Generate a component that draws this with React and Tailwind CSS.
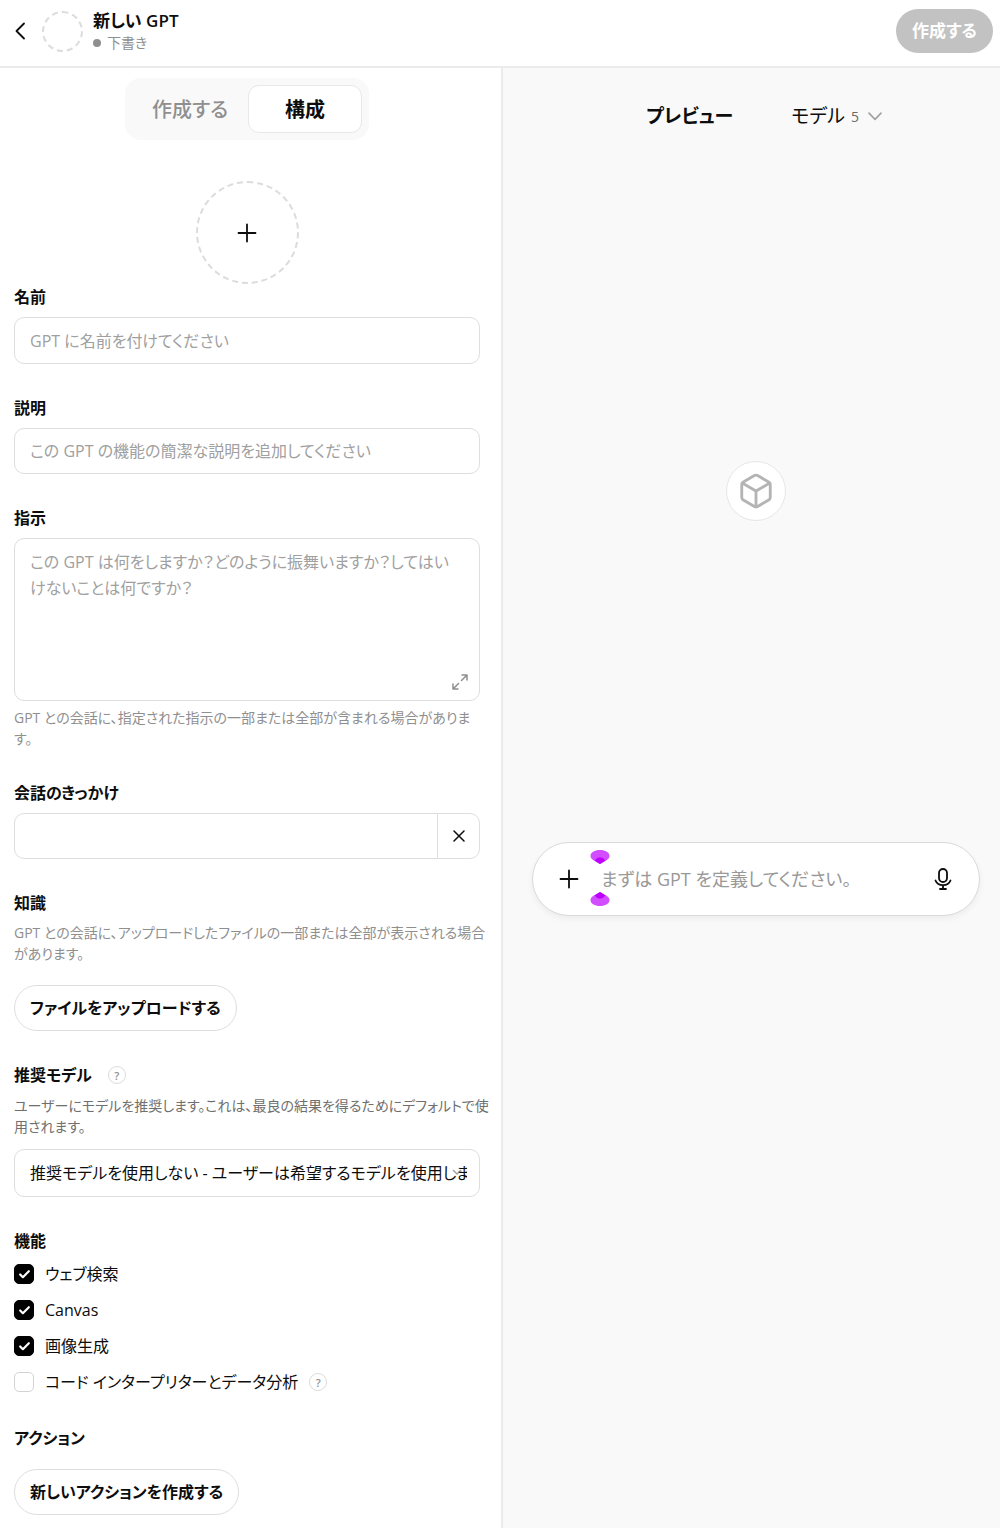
import React, { useState } from 'react';
import { Box, Check } from 'lucide-react';

const FEATURES = [
  { id: 'web', label: 'ウェブ検索', on: true },
  { id: 'canvas', label: 'Canvas', on: true },
  { id: 'image', label: '画像生成', on: true },
  { id: 'code', label: 'コード インタープリターとデータ分析', on: false, help: true },
];

const Plus = () => (
  <svg width="20" height="20" viewBox="0 0 20 20" fill="none" stroke="currentColor" strokeWidth="1.8" strokeLinecap="round" aria-hidden="true">
    <path d="M10 1.5v17M1.5 10h17" />
  </svg>
);

const Help = () => (
  <button type="button" aria-label="ヘルプ" className="flex h-[18px] w-[18px] shrink-0 items-center justify-center rounded-full border border-[#dcdcdc] text-[11px] leading-none font-semibold text-[#8f8f8f]">
    ?
  </button>
);

const Label = ({ htmlFor, children }) => (
  <label htmlFor={htmlFor} className="block text-base leading-[26px] font-semibold">{children}</label>
);

const Heading = ({ children }) => (
  <h2 className="text-base leading-[26px] font-semibold">{children}</h2>
);

const fieldClass = 'block w-full rounded-[10px] border border-[#dedede] px-[15px] text-base placeholder:text-[#a0a0a0] outline-none';
const pillClass = 'h-[46px] rounded-full border border-[#dedede] bg-white px-[15px] text-base font-semibold';
// hints may run a little past the fields before they wrap
const hintClass = '-mr-[14px] text-[14px] leading-[21px]';

const Header = () => (
  <header className="flex h-[68px] items-center border-b-2 border-[#ebebeb] bg-white pr-[7px] pb-1 pl-[14px]">
    <button type="button" aria-label="戻る" className="flex w-[28px]">
      <svg width="12" height="18" viewBox="0 0 12 18" fill="none" stroke="currentColor" strokeWidth="1.8" strokeLinecap="round" strokeLinejoin="round">
        <path d="M10 1.5 2.5 9l7.5 7.5" />
      </svg>
    </button>
    <div className="h-[41px] w-[41px] rounded-full border-2 border-dashed border-[#dcdcdc]" />
    <div className="ml-[10px]">
      <h1 className="text-[17px] leading-[23px] font-semibold">新しい GPT</h1>
      <p className="flex items-center gap-[6px] text-[14px] leading-[22px] text-[#8f8f8f]">
        <span className="h-2 w-2 rounded-full bg-[#8f8f8f]" />
        下書き
      </p>
    </div>
    <button type="button" className="ml-auto h-11 rounded-full bg-[#c2c2c2] px-4 text-[17px] font-semibold text-white">作成する</button>
  </header>
);

const Tabs = () => (
  <div role="tablist" className="mx-auto flex h-[62px] rounded-2xl bg-[#f9f9f9] p-[7px]">
    <button type="button" role="tab" aria-selected="false" className="px-5 pt-[2px] text-[20px] font-medium text-[#8f8f8f]">作成する</button>
    <button type="button" role="tab" aria-selected="true" className="w-[114px] rounded-[11px] border border-[#e8e8e8] bg-white pt-[2px] text-[20px] font-semibold">構成</button>
  </div>
);

const Preview = () => (
  <section aria-label="プレビュー" className="flex min-w-0 flex-1 flex-col bg-[#f9f9f9] pr-5 pl-[29px]">
    <div className="mt-8 flex h-8 items-center justify-center gap-[58px] pl-4 text-[19px]">
      <h2 className="font-semibold">プレビュー</h2>
      <button type="button" className="flex items-center">
        モデル
        <span className="ml-[6px] text-[14px] font-medium text-[#6b6b6b]">5</span>
        <svg className="ml-[9px]" width="14" height="9" viewBox="0 0 14 9" fill="none" stroke="#a3a3a3" strokeWidth="1.7" strokeLinecap="round" strokeLinejoin="round">
          <path d="M1 1.2 7 7.4l6-6.2" />
        </svg>
      </button>
    </div>

    <div className="mx-auto mt-[329px] flex h-[60px] w-[60px] items-center justify-center rounded-full border border-[#e6e6e6] bg-white">
      <Box size={38} strokeWidth={1.8} className="text-[#b4b4b4]" />
    </div>

    <div className="relative mt-[321px] flex h-[74px] items-center rounded-full border border-[#dadada] bg-white pr-[27px] pl-[26px] shadow-[0_3px_6px_rgba(0,0,0,0.05)]">
      <button type="button" aria-label="ファイルを追加"><Plus /></button>
      <input type="text" aria-label="メッセージ" placeholder="まずは GPT を定義してください。" className="ml-[22px] min-w-0 flex-1 bg-transparent text-[18px] outline-none placeholder:text-[#989898]" />
      <button type="button" aria-label="音声入力">
        <svg width="18" height="22" viewBox="0 0 18 22" fill="none" stroke="currentColor" strokeWidth="1.8" strokeLinecap="round" strokeLinejoin="round">
          <rect x="5" y="1" width="8" height="13" rx="4" />
          <path d="M1.500 12.500c1.200 3 4 4.700 7.500 4.700s6.300-1.700 7.500-4.700M9 17.500V21M6 21h6" />
        </svg>
      </button>
      {/* caret handles above and below the start of the text */}
      <svg className="pointer-events-none absolute top-[7px] left-[57px]" width="20" height="58" viewBox="0 0 20 58" aria-hidden="true">
        <path d="M10 0C15.500 0 19.500 2.500 19.500 6S15 11 10 14C5 11 .5 9.500.5 6S4.500 0 10 0Z" fill="#d24dff" />
        <path d="M4.500 10.500Q10 4 15.500 10.500L10 14Z" fill="#bf00ff" />
        <path d="M10 56c5.500 0 9.500-2.500 9.500-6S15 45 10 42C5 45 .5 46.500.5 50S4.500 56 10 56Z" fill="#d24dff" />
        <path d="M4.500 45.500Q10 52 15.500 45.500L10 42Z" fill="#bf00ff" />
      </svg>
    </div>
  </section>
);

const App = () => {
  const [features, setFeatures] = useState(FEATURES);

  const toggle = (id) => {
    setFeatures(features.map((f) => (f.id === id ? { ...f, on: !f.on } : f)));
  };

  return (
    <div lang="ja" className="flex min-h-screen flex-col bg-white font-['Open_Sans','Noto_Sans_CJK_JP',sans-serif] text-[#0d0d0d] [font-feature-settings:'palt']">
      <Header />
      <main className="flex flex-1">
        <form className="flex shrink-0 grow-0 basis-[503px] flex-col border-r-2 border-[#ebebeb] pt-[10px] pr-[21px] pb-[13px] pl-[14px]">
          <Tabs />

          <button type="button" aria-label="画像を追加" className="mx-auto mt-[41px] flex h-[103px] w-[103px] items-center justify-center rounded-full border-2 border-dashed border-[#dcdcdc]">
            <Plus />
          </button>

          <div className="flex flex-col gap-[31px]">
            <div>
              <Label htmlFor="name">名前</Label>
              <input id="name" type="text" placeholder="GPT に名前を付けてください" className={`${fieldClass} mt-[7px] h-[47px]`} />
            </div>

            <div>
              <Label htmlFor="description">説明</Label>
              <input id="description" type="text" placeholder="この GPT の機能の簡潔な説明を追加してください" className={`${fieldClass} mt-[7px] h-[46px]`} />
            </div>

            <div>
              <Label htmlFor="instructions">指示</Label>
              <div className="relative mt-[7px]">
                <textarea
                  id="instructions"
                  placeholder={'この GPT は何をしますか？どのように振舞いますか？してはい\nけないことは何ですか？'}
                  className={`${fieldClass} h-[163px] resize-none py-[10px] leading-[26px]`}
                />
                <button type="button" aria-label="拡大" className="absolute right-3 bottom-[11px] text-[#8f8f8f]">
                  <svg width="16" height="16" viewBox="0 0 16 16" fill="none" stroke="currentColor" strokeWidth="1.5" strokeLinecap="round" strokeLinejoin="round">
                    <path d="M10 1h5v5M15 1 9.500 6.500M6 15H1v-5M1 15l5.500-5.500" />
                  </svg>
                </button>
              </div>
              <p className={`${hintClass} mt-[6px] text-[#8f8f8f]`}>
                GPT との会話に、指定された指示の一部または全部が含まれる場合がありま<br />す。
              </p>
            </div>

            <div>
              <Label htmlFor="starter">会話のきっかけ</Label>
              <div className="mt-[7px] flex h-[46px] rounded-[10px] border border-[#dedede]">
                <input id="starter" type="text" className="min-w-0 flex-1 rounded-l-[10px] px-[15px] text-base outline-none" />
                <button type="button" aria-label="削除" className="flex w-[42px] items-center justify-center border-l border-[#dedede]">
                  <svg width="12" height="12" viewBox="0 0 12 12" fill="none" stroke="currentColor" strokeWidth="1.5" strokeLinecap="round">
                    <path d="m1 1 10 10M11 1 1 11" />
                  </svg>
                </button>
              </div>
            </div>

            <div>
              <Heading>知識</Heading>
              <p className={`${hintClass} mt-[6px] text-[#8f8f8f]`}>
                GPT との会話に、アップロードしたファイルの一部または全部が表示される場合<br />があります。
              </p>
              <button type="button" className={`${pillClass} mt-[21px]`}>ファイルをアップロードする</button>
            </div>

            <div>
              <div className="flex items-center gap-4">
                <Label htmlFor="model">推奨モデル</Label>
                <Help />
              </div>
              <p className={`${hintClass} mt-[7px] text-[#6f6f6f]`}>
                ユーザーにモデルを推奨します。これは、最良の結果を得るためにデフォルトで使<br />用されます。
              </p>
              <div className="relative mt-3">
                {/* the arrow sits beneath the select's text */}
                <svg className="absolute top-[20px] right-[18px]" width="10" height="7" viewBox="0 0 10 7" fill="none" stroke="#a3a3a3" strokeWidth="1.5" aria-hidden="true">
                  <path d="m1 1 4 4 4-4" />
                </svg>
                <select id="model" className={`${fieldClass} relative h-12 appearance-none bg-transparent pr-[12px]`}>
                  <option>推奨モデルを使用しない - ユーザーは希望するモデルを使用します</option>
                </select>
              </div>
            </div>
          </div>

          <fieldset className="mt-[31px]">
            <legend className="pb-[2px] text-base leading-[26px] font-semibold">機能</legend>
            {features.map((f) => (
              <div key={f.id} className="flex h-9 items-center gap-[11px]">
                <span className="grid h-5 w-5 place-items-center">
                  <input
                    id={f.id}
                    type="checkbox"
                    checked={f.on}
                    onChange={() => toggle(f.id)}
                    className="col-start-1 row-start-1 h-5 w-5 appearance-none rounded-[5px] border border-[#d4d4d4] bg-white checked:border-black checked:bg-black"
                  />
                  {f.on && <Check size={13} strokeWidth={4} className="pointer-events-none z-10 col-start-1 row-start-1 text-white" />}
                </span>
                <label htmlFor={f.id} className="text-base leading-[26px]">{f.label}</label>
                {f.help && <Help />}
              </div>
            ))}
          </fieldset>

          <div className="mt-[25px]">
            <Heading>アクション</Heading>
            <button type="button" className={`${pillClass} mt-[18px]`}>新しいアクションを作成する</button>
          </div>
        </form>
        <Preview />
      </main>
    </div>
  );
};

export default App;
